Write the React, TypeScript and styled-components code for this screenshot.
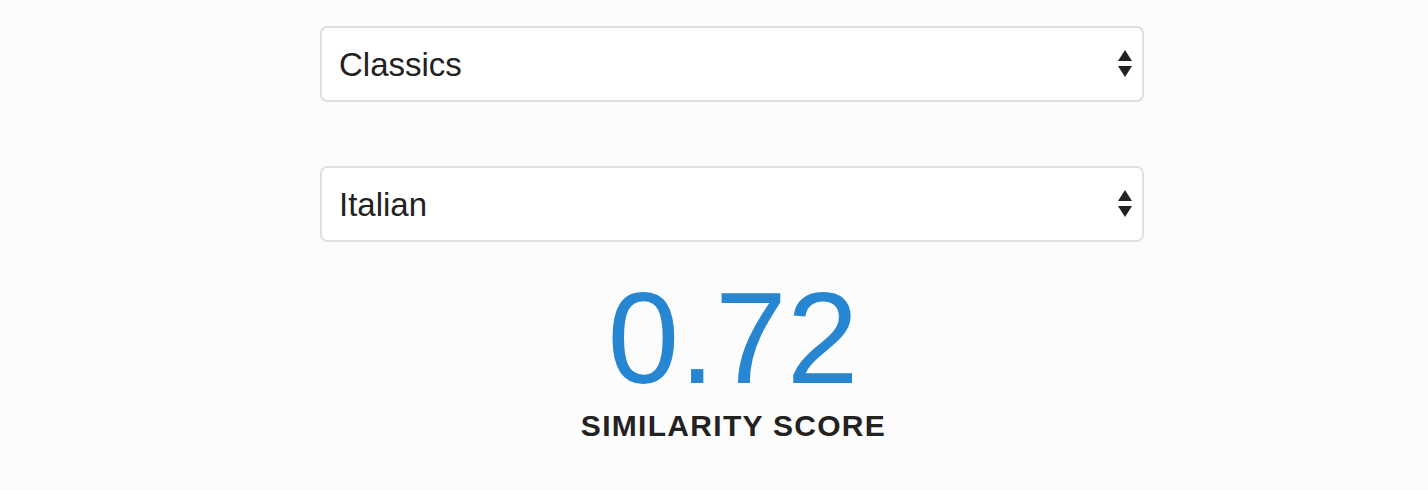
import React from "react";
import styled, { createGlobalStyle } from "styled-components";

const Global = createGlobalStyle`
  html, body { margin: 0; padding: 0; background: #fcfcfc; }
  body { font-family: "Liberation Sans", Arial, sans-serif; }
`;

const Page = styled.div`
  width: 1428px;
  height: 490px;
  display: flex;
  justify-content: flex-start;
  padding-left: 320px;
  padding-top: 26px;
  box-sizing: border-box;
`;

const Column = styled.div`
  width: 824px;
  display: flex;
  flex-direction: column;
  align-items: stretch;
`;

const SelectBox = styled.div<{ $mt?: number }>`
  height: 76px;
  box-sizing: border-box;
  margin-top: ${(p) => p.$mt ?? 0}px;
  border: 2px solid #e0e0e0;
  border-radius: 7px;
  background: #ffffff;
  display: flex;
  align-items: center;
  justify-content: space-between;
  padding: 0 9px 0 17px;
  font-size: 33px;
  color: #222;
`;

const Label = styled.span`
  line-height: 1;
`;

const Score = styled.div`
  margin-top: 32px;
  text-align: center;
  color: #2686d1;
  font-size: 129px;
  line-height: 1;
  padding-left: 2px;
`;

const Caption = styled.div`
  margin-top: 6px;
  text-align: center;
  font-weight: 700;
  font-size: 30px;
  letter-spacing: 1.3px;
  color: #222;
  padding-left: 3px;
`;

const Arrows = () => (
  <svg width="16" height="30" viewBox="0 0 16 30">
    <polygon points="8,1 15,12 1,12" fill="#222" />
    <polygon points="1,17 15,17 8,28" fill="#222" />
  </svg>
);

const Select = ({ label, mt }: { label: string; mt?: number }) => (
  <SelectBox $mt={mt}>
    <Label>{label}</Label>
    <Arrows />
  </SelectBox>
);

export default function App() {
  return (
    <>
      <Global />
      <Page>
        <Column>
          <Select label="Classics" />
          <Select label="Italian" mt={64} />
          <Score>0.72</Score>
          <Caption>SIMILARITY SCORE</Caption>
        </Column>
      </Page>
    </>
  );
}
